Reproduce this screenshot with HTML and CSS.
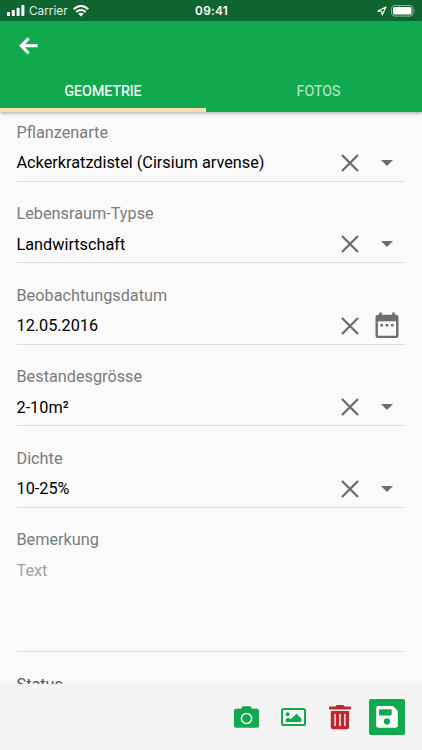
FILE: index.html
```html
<!DOCTYPE html>
<html lang="de">
<head>
<meta charset="utf-8">
<title>Geometrie</title>
<link rel="stylesheet" href="styles.css">
</head>
<body>
<svg class="defs" width="0" height="0">
  <symbol id="clear" viewBox="0 0 18 18"><path d="M1 1L17 17M17 1L1 17" fill="none" stroke="#6d6d6d" stroke-width="2.3"/></symbol>
  <symbol id="caret" viewBox="0 0 12 6"><path d="M0 0H12L6 6Z" fill="#6d6d6d"/></symbol>
</svg>
<div class="app">
  <header class="header">
    <div class="status">
      <div class="status-left">
        <svg width="18" height="11" viewBox="0 0 18 11" fill="#fff"><rect x="0" y="7" width="3" height="4" rx=".8"/><rect x="4.8" y="5" width="3" height="6" rx=".8"/><rect x="9.6" y="2.7" width="3" height="8.3" rx=".8"/><rect x="14.4" y="0" width="3" height="11" rx=".8"/></svg>
        <span class="carrier">Carrier</span>
        <svg class="wifi" width="16" height="12" viewBox="0 0 16 12"><g fill="none" stroke="#fff" stroke-width="2.1"><path d="M.8 4.2Q8-2.2 15.2 4.2"/><path d="M3.3 7Q8 3 12.7 7"/></g><path d="M5.3 8.8Q8 6.8 10.7 8.8L8 11.5Z" fill="#fff"/></svg>
      </div>
      <span class="time">09:41</span>
      <div class="status-right">
        <svg width="10" height="10" viewBox="0 0 10 10"><path d="M.9 5.1L9 .9L5.2 9L4.7 5.3Z" fill="none" stroke="#fff" stroke-width="1.1" stroke-linejoin="round"/></svg>
        <svg width="25" height="12" viewBox="0 0 25 12"><rect x=".5" y=".5" width="21.5" height="10.6" rx="3" fill="none" stroke="#8fb69c"/><rect x="2" y="2" width="18.5" height="7.6" rx="1.6" fill="#fff"/><path d="M23.2 4Q24.6 5.8 23.2 7.6Z" fill="#8fb69c"/></svg>
      </div>
    </div>
    <div class="toolbar">
      <svg width="20" height="18" viewBox="0 0 20 18"><path d="M9.7 1.3L2.3 8.8L9.7 16.3M2.8 8.8H18.6" fill="none" stroke="#fff" stroke-width="3.1"/></svg>
    </div>
    <nav class="tabs">
      <span class="tab active">GEOMETRIE</span>
      <span class="tab second">FOTOS</span>
    </nav>
  </header>
  <main class="form">
    <section class="field">
      <div class="label">Pflanzenarte</div>
      <div class="row"><span class="value">Ackerkratzdistel (Cirsium arvense)</span><svg class="clear"><use href="#clear"/></svg><span class="action"><svg class="caret"><use href="#caret"/></svg></span></div>
    </section>
    <section class="field">
      <div class="label">Lebensraum-Typse</div>
      <div class="row"><span class="value">Landwirtschaft</span><svg class="clear"><use href="#clear"/></svg><span class="action"><svg class="caret"><use href="#caret"/></svg></span></div>
    </section>
    <section class="field">
      <div class="label">Beobachtungsdatum</div>
      <div class="row"><span class="value">12.05.2016</span><svg class="clear"><use href="#clear"/></svg><span class="action"><svg width="24" height="27" viewBox="0 0 24 27"><path d="M3 2.8H4.2V.5H6.8V2.8H17.2V.5H19.8V2.8H21Q23.5 2.8 23.5 5.3V23.5Q23.5 26 21 26H3Q.5 26 .5 23.5V5.3Q.5 2.8 3 2.8ZM2.9 9.3V23.7H21.1V9.3Z" fill="#6d6d6d" fill-rule="evenodd"/><path d="M5.4 11.9h2.6v2.5h-2.6zM10.7 11.9h2.6v2.5h-2.6zM16 11.9h2.6v2.5h-2.6z" fill="#6d6d6d"/></svg></span></div>
    </section>
    <section class="field">
      <div class="label">Bestandesgrösse</div>
      <div class="row"><span class="value">2-10m²</span><svg class="clear"><use href="#clear"/></svg><span class="action"><svg class="caret"><use href="#caret"/></svg></span></div>
    </section>
    <section class="field">
      <div class="label">Dichte</div>
      <div class="row"><span class="value">10-25%</span><svg class="clear"><use href="#clear"/></svg><span class="action"><svg class="caret"><use href="#caret"/></svg></span></div>
    </section>
    <section class="field remark">
      <div class="label">Bemerkung</div>
      <div class="row"><span class="value placeholder">Text</span></div>
    </section>
    <section class="field">
      <div class="label dark">Status</div>
    </section>
  </main>
  <footer class="actions">
    <svg class="camera" width="25" height="22" viewBox="0 0 25 22"><path d="M2 2.8H7L8 .9Q8.3.2 9 .2H16Q16.7.2 17 .9L18 2.8H23Q25 2.8 25 4.8V19.7Q25 21.7 23 21.7H2Q0 21.7 0 19.7V4.8Q0 2.8 2 2.8Z" fill="#10a94d"/><circle cx="12.5" cy="12.5" r="5.1" fill="none" stroke="#f4f4f4" stroke-width="1.5"/></svg>
    <svg width="25" height="18" viewBox="0 0 25 18"><rect x="1" y="1" width="23" height="16" rx="1.6" fill="none" stroke="#10a94d" stroke-width="2"/><circle cx="6.6" cy="6.2" r="2" fill="#10a94d"/><path d="M4.8 14V11.3L7.2 9.6L9.6 11.3L15.5 5.7L20.3 10.5V14Z" fill="#10a94d"/></svg>
    <svg width="22" height="26" viewBox="0 0 22 26"><path d="M1 2.5H6.5L7.5 1H14.5L15.5 2.5H21Q22 2.5 22 3.5V5.5H0V3.5Q0 2.5 1 2.5ZM1.8 7H20.2V23Q20.2 25.2 18 25.2H4Q1.8 25.2 1.8 23Z" fill="#c1272d"/><path d="M6.2 10V22M11 10V22M15.8 10V22" stroke="#f4f4f4" stroke-width="1.5"/></svg>
    <span class="save"><svg width="22" height="22" viewBox="0 0 22 22"><path d="M2.5 0H16.2Q17 0 17.6.6L21.2 4.2Q21.8 4.8 21.8 5.6V19.5Q21.8 21.8 19.5 21.8H2.5Q.2 21.8.2 19.5V2.3Q.2 0 2.5 0Z" fill="#fff"/><rect x="3" y="3.2" width="12.7" height="6.2" rx=".8" fill="#10a94d"/><circle cx="11" cy="15.4" r="3.1" fill="#10a94d"/></svg></span>
  </footer>
</div>
</body>
</html>
```
FILE: styles.css
```css
* { box-sizing: border-box; }
body { margin: 0; font-family: Roboto, sans-serif; background: #fafafa; }
.defs { display: none; }
svg { display: block; flex: none; }
.app { display: flex; flex-direction: column; width: 422px; height: 750px; overflow: hidden; }
.header { flex: none; height: 112px; background: #10a94d; box-shadow: 0 1px 4px rgba(0, 0, 0, .35); z-index: 1; }
.status { display: grid; grid-template-columns: 1fr auto 1fr; align-items: center; height: 21px; padding: 0 6px 0 7px; background: #0f652f; color: #fff; }
.status-left, .status-right { display: flex; align-items: center; }
.status-right { justify-content: flex-end; gap: 4px; }
.carrier { margin: 1px 5px 0 4px; font: 11.8px/20px Inter, sans-serif; color: #e3eee6; }
.time { font: 600 11.8px/20px Inter, sans-serif; padding-top: 1px; letter-spacing: .25px; }
.toolbar { height: 49px; padding: 16px 19px; }
.tabs { display: grid; grid-template-columns: 206px 1fr; height: 42px; }
.tab { padding-top: 11px; text-align: center; font-size: 14.2px; line-height: 20px; color: #b2e3c5; -webkit-text-stroke: .2px currentColor; }
.tab.active { color: #fff; border-bottom: 4px solid #fbddae; -webkit-text-stroke-width: .2px; }
.tab.second { padding-left: 9px; }
.form { flex: 1; min-height: 0; overflow: hidden; padding: 8px 17px 0 16.5px; }
.field { height: 61.5px; margin-bottom: 20px; }
.label { height: 24px; padding-top: .5px; line-height: 24px; font-size: 16.25px; color: #7b7b7b; }
.row { display: flex; align-items: center; height: 37.5px; padding-top: 1px; border-bottom: 1px solid #dedede; }
.value { flex: 1; padding-top: 1px; font-size: 16.25px; line-height: 24px; color: #000; }
.clear { width: 18px; height: 18px; }
.action { display: flex; justify-content: center; width: 24px; margin: 0 6px 0 16px; }
.caret { width: 12px; height: 6px; }
.remark { height: 125px; }
.remark .row { height: 100px; align-items: flex-start; padding-top: 6px; }
.placeholder { color: #a3a3a3; }
.dark { color: #555; }
.actions { flex: none; display: flex; align-items: center; justify-content: flex-end; height: 66px; padding: 0 17px 0 0; gap: 23px; background: #f4f4f4; box-shadow: 0 0 2px rgba(0, 0, 0, .05); }
.camera { margin-right: -1px; }
.save { display: flex; align-items: center; justify-content: center; width: 36.5px; height: 36.5px; margin-left: -5.5px; border-radius: 2px; background: #10a94d; }
```
